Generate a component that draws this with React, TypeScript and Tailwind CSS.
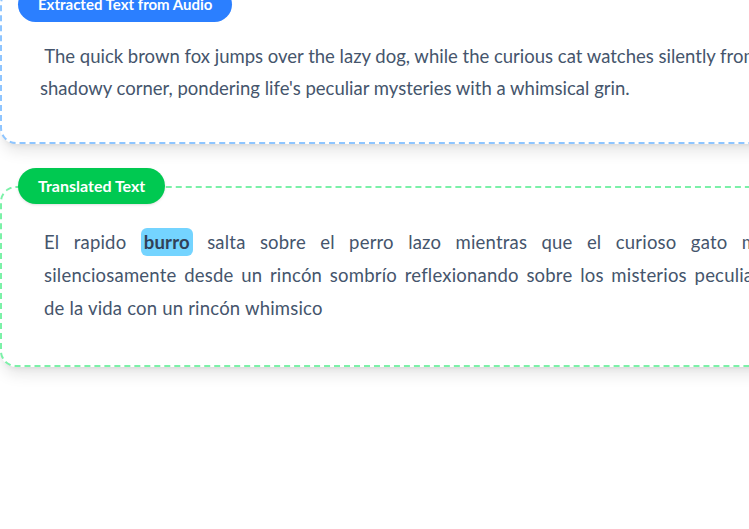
export default function App() {
  return (
    <div className="h-[529px] w-[749px] overflow-hidden bg-white" style={{ fontFamily: 'Lato, "Noto Sans", sans-serif' }}>
      <div className="-mt-[12px] w-[820px] space-y-[42px]">
        <div className="relative rounded-2xl border-2 border-dashed border-blue-300 bg-white px-[38px] pb-[38px] pt-[50px] shadow-lg">
          <span className="absolute -top-[3px] left-[16px] rounded-full bg-blue-500 px-5 py-[6px] text-[15px] font-bold text-white">
            Extracted Text from Audio
          </span>
          <p className="text-[18.5px] leading-[32px] text-slate-600">
            &nbsp;The quick brown fox jumps over the lazy dog, while the curious cat watches silently from a shadowy corner, pondering life's peculiar mysteries with a whimsical grin.
          </p>
        </div>
        <div className="relative rounded-2xl border-2 border-dashed border-green-300 bg-white pb-[40px] pl-[42px] pr-[40px] pt-[38px] shadow-lg">
          <span className="absolute -top-[20px] left-[16px] rounded-full bg-green-500 px-5 py-[6px] text-[16px] font-bold text-white shadow">
            Translated Text
          </span>
          <p className="text-justify text-[18.5px] leading-[33px] tracking-[0.2px] text-slate-600">
            El rapido <span className="rounded-md bg-sky-300 px-[3px] py-[3px] font-bold text-slate-700">burro</span> salta sobre el perro lazo mientras que el curioso gato mira silenciosamente desde un rincón sombrío reflexionando sobre los misterios peculiares de la vida con un rincón whimsico
          </p>
        </div>
      </div>
    </div>
  );
}
